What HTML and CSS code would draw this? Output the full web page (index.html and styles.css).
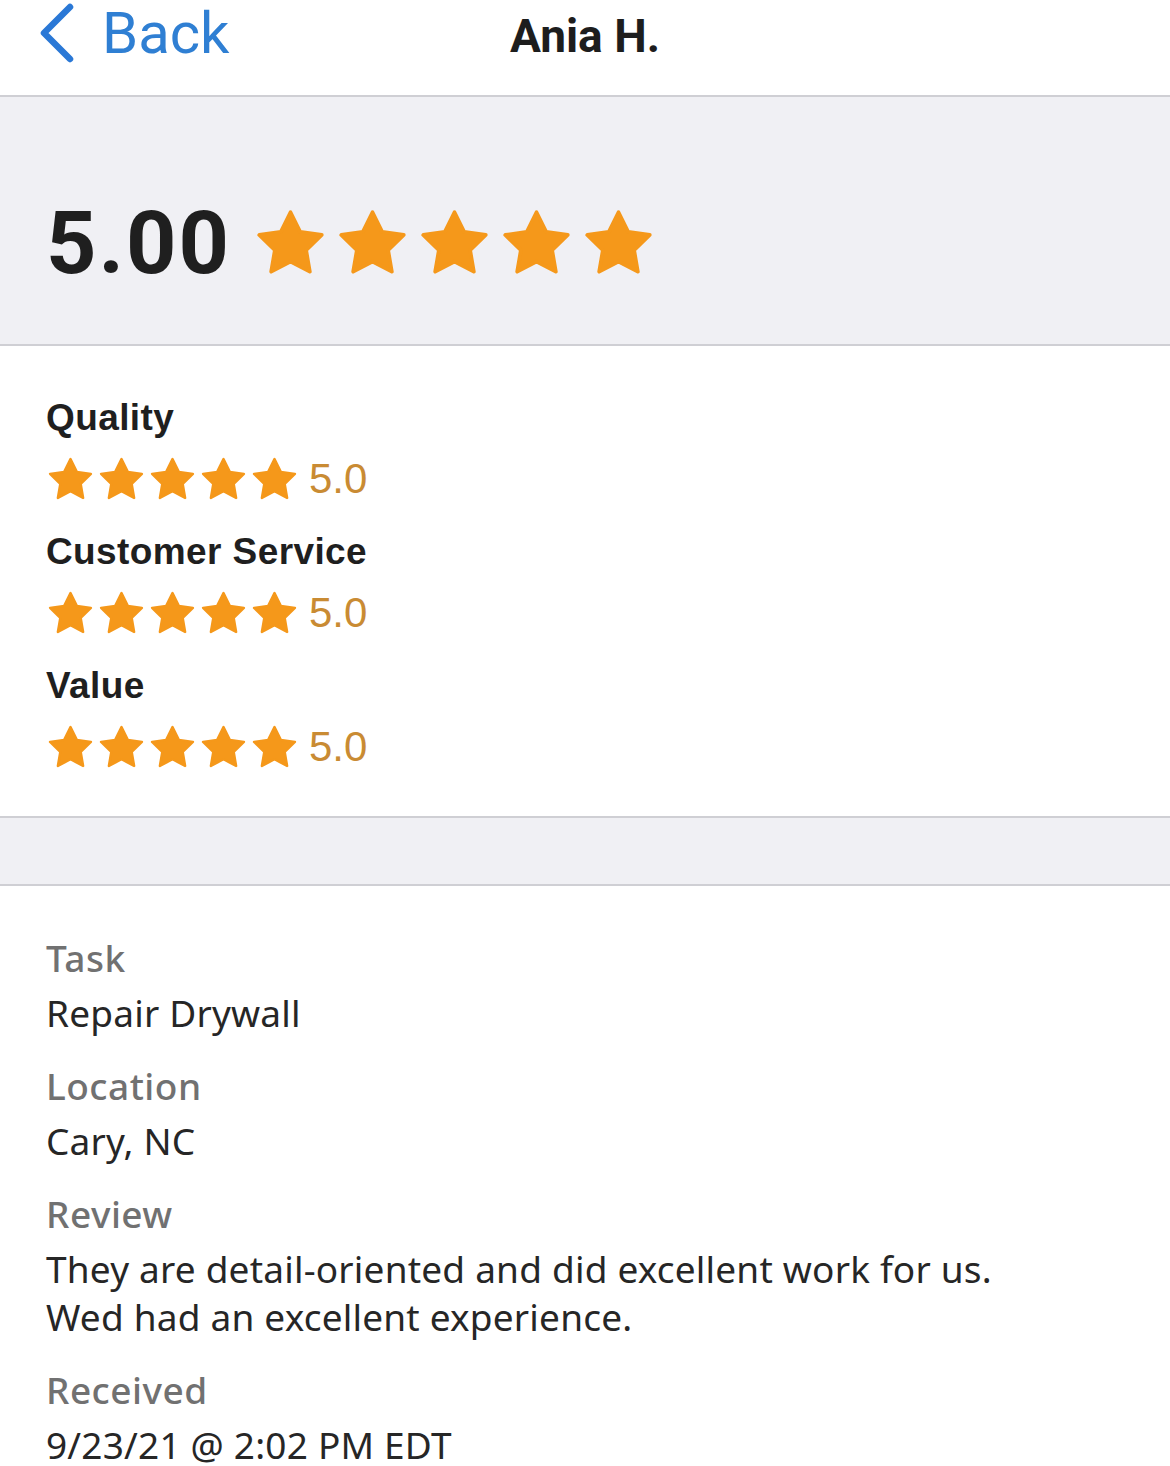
FILE: index.html
```html
<!DOCTYPE html>
<html lang="en">

<head>
  <meta charset="UTF-8" />
  <meta name="viewport" content="width=device-width, initial-scale=1.0" />
  <title>Ania H. - Review</title>
  <link rel="stylesheet" href="styles.css">
</head>

<body>
  <svg width="0" height="0" class="defs">
    <defs>
      <polygon id="star" points="12,2 15.09,8.26 22,9.27 17,14.14 18.18,21.02 12,17.77 5.82,21.02 7,14.14 2,9.27 8.91,8.26" />
    </defs>
  </svg>

  <header class="nav-bar">
    <a class="back-link" href="#">
      <svg class="chevron" viewBox="0 0 40 60" width="40" height="60">
        <polyline points="34,4 8,30 34,56" />
      </svg>
      <span>Back</span>
    </a>
    <h1 class="nav-title">Ania H.</h1>
  </header>

  <section class="overall">
    <span class="overall-score">5.00</span>
    <div class="stars stars-big">
      <svg viewBox="0 0 24 24"><use href="#star" /></svg>
      <svg viewBox="0 0 24 24"><use href="#star" /></svg>
      <svg viewBox="0 0 24 24"><use href="#star" /></svg>
      <svg viewBox="0 0 24 24"><use href="#star" /></svg>
      <svg viewBox="0 0 24 24"><use href="#star" /></svg>
    </div>
  </section>

  <section class="ratings">
    <div class="rating">
      <h2>Quality</h2>
      <div class="rating-row">
        <div class="stars stars-small">
          <svg viewBox="0 0 24 24"><use href="#star" /></svg>
          <svg viewBox="0 0 24 24"><use href="#star" /></svg>
          <svg viewBox="0 0 24 24"><use href="#star" /></svg>
          <svg viewBox="0 0 24 24"><use href="#star" /></svg>
          <svg viewBox="0 0 24 24"><use href="#star" /></svg>
        </div>
        <span class="rating-value">5.0</span>
      </div>
    </div>

    <div class="rating">
      <h2>Customer Service</h2>
      <div class="rating-row">
        <div class="stars stars-small">
          <svg viewBox="0 0 24 24"><use href="#star" /></svg>
          <svg viewBox="0 0 24 24"><use href="#star" /></svg>
          <svg viewBox="0 0 24 24"><use href="#star" /></svg>
          <svg viewBox="0 0 24 24"><use href="#star" /></svg>
          <svg viewBox="0 0 24 24"><use href="#star" /></svg>
        </div>
        <span class="rating-value">5.0</span>
      </div>
    </div>

    <div class="rating">
      <h2>Value</h2>
      <div class="rating-row">
        <div class="stars stars-small">
          <svg viewBox="0 0 24 24"><use href="#star" /></svg>
          <svg viewBox="0 0 24 24"><use href="#star" /></svg>
          <svg viewBox="0 0 24 24"><use href="#star" /></svg>
          <svg viewBox="0 0 24 24"><use href="#star" /></svg>
          <svg viewBox="0 0 24 24"><use href="#star" /></svg>
        </div>
        <span class="rating-value">5.0</span>
      </div>
    </div>
  </section>

  <div class="spacer"></div>

  <section class="details">
    <div class="field">
      <div class="field-label">Task</div>
      <div class="field-value">Repair Drywall</div>
    </div>
    <div class="field">
      <div class="field-label">Location</div>
      <div class="field-value">Cary, NC</div>
    </div>
    <div class="field">
      <div class="field-label">Review</div>
      <div class="field-value">They are detail-oriented and did excellent work for us.<br>Wed had an excellent experience.</div>
    </div>
    <div class="field">
      <div class="field-label">Received</div>
      <div class="field-value">9/23/21 @ 2:02 PM EDT</div>
    </div>
  </section>
</body>

</html>
```

FILE: styles.css
```css
:root {
  --blue: #2f7fd3;
  --star: #f5981a;
  --star-text: #c98b33;
  --gray-bg: #f0f0f4;
  --line: #cfcfd4;
  --text: #222;
  --label: #717171;
}

body {
  margin: 0;
  background: #fff;
  color: var(--text);
  font-family: Roboto, "Liberation Sans", Arial, sans-serif;
}

.defs {
  position: absolute;
}

/* nav bar */
.nav-bar {
  position: relative;
  height: 95px;
  border-bottom: 2px solid var(--line);
  display: flex;
  align-items: center;
  justify-content: center;
}

.back-link {
  position: absolute;
  left: 36px;
  top: 0;
  height: 66px;
  display: flex;
  align-items: center;
  gap: 26px;
  color: var(--blue);
  text-decoration: none;
  font-size: 58px;
  line-height: 66px;
}

.chevron polyline {
  fill: none;
  stroke: #2a78d6;
  stroke-width: 6.5;
  stroke-linecap: round;
  stroke-linejoin: round;
}

.nav-title {
  margin: 0 0 24px;
  font-size: 46px;
  font-weight: 700;
  color: #1d1d1d;
}

/* overall score */
.overall {
  background: var(--gray-bg);
  border-bottom: 2px solid var(--line);
  padding: 96px 46px 51px;
  display: flex;
  align-items: center;
  gap: 22px;
  height: 100px;
}

.overall-score {
  font-size: 88px;
  font-weight: 700;
  letter-spacing: 2px;
  color: #1f1f1f;
  line-height: 100px;
}

.stars {
  display: flex;
}

.stars svg {
  fill: var(--star);
  stroke: var(--star);
  stroke-width: 1.2;
  stroke-linejoin: round;
}

.stars-big {
  gap: 7px;
}

.stars-big svg {
  width: 75px;
  height: 75px;
}

/* sub ratings */
.ratings {
  padding: 50px 46px 44px;
  border-bottom: 2px solid var(--line);
  display: flex;
  flex-direction: column;
  gap: 26px;
}

.rating h2 {
  margin: 0;
  font-family: "Liberation Sans", Arial, sans-serif;
  font-size: 37px;
  line-height: 44px;
  font-weight: 700;
  color: #1f1f1f;
  letter-spacing: 0.4px;
}

.rating-row {
  margin-top: 14px;
  height: 50px;
  display: flex;
  align-items: center;
  gap: 10px;
}

.stars-small {
  gap: 2px;
}

.stars-small svg {
  width: 49px;
  height: 49px;
}

.rating-value {
  font-family: "Liberation Sans", Arial, sans-serif;
  font-size: 42px;
  color: var(--star-text);
}

.spacer {
  height: 66px;
  background: var(--gray-bg);
  border-bottom: 2px solid var(--line);
}

/* details */
.details {
  padding: 48px 46px 0;
  display: flex;
  flex-direction: column;
  gap: 25px;
  font-family: "Noto Sans", "Open Sans", sans-serif;
}

.field-label {
  font-size: 37px;
  line-height: 48px;
  font-weight: 500;
  letter-spacing: 0.5px;
  color: var(--label);
}

.field-value {
  margin-top: 7px;
  font-size: 37px;
  line-height: 48px;
  letter-spacing: 0.2px;
  color: #262626;
}
```
